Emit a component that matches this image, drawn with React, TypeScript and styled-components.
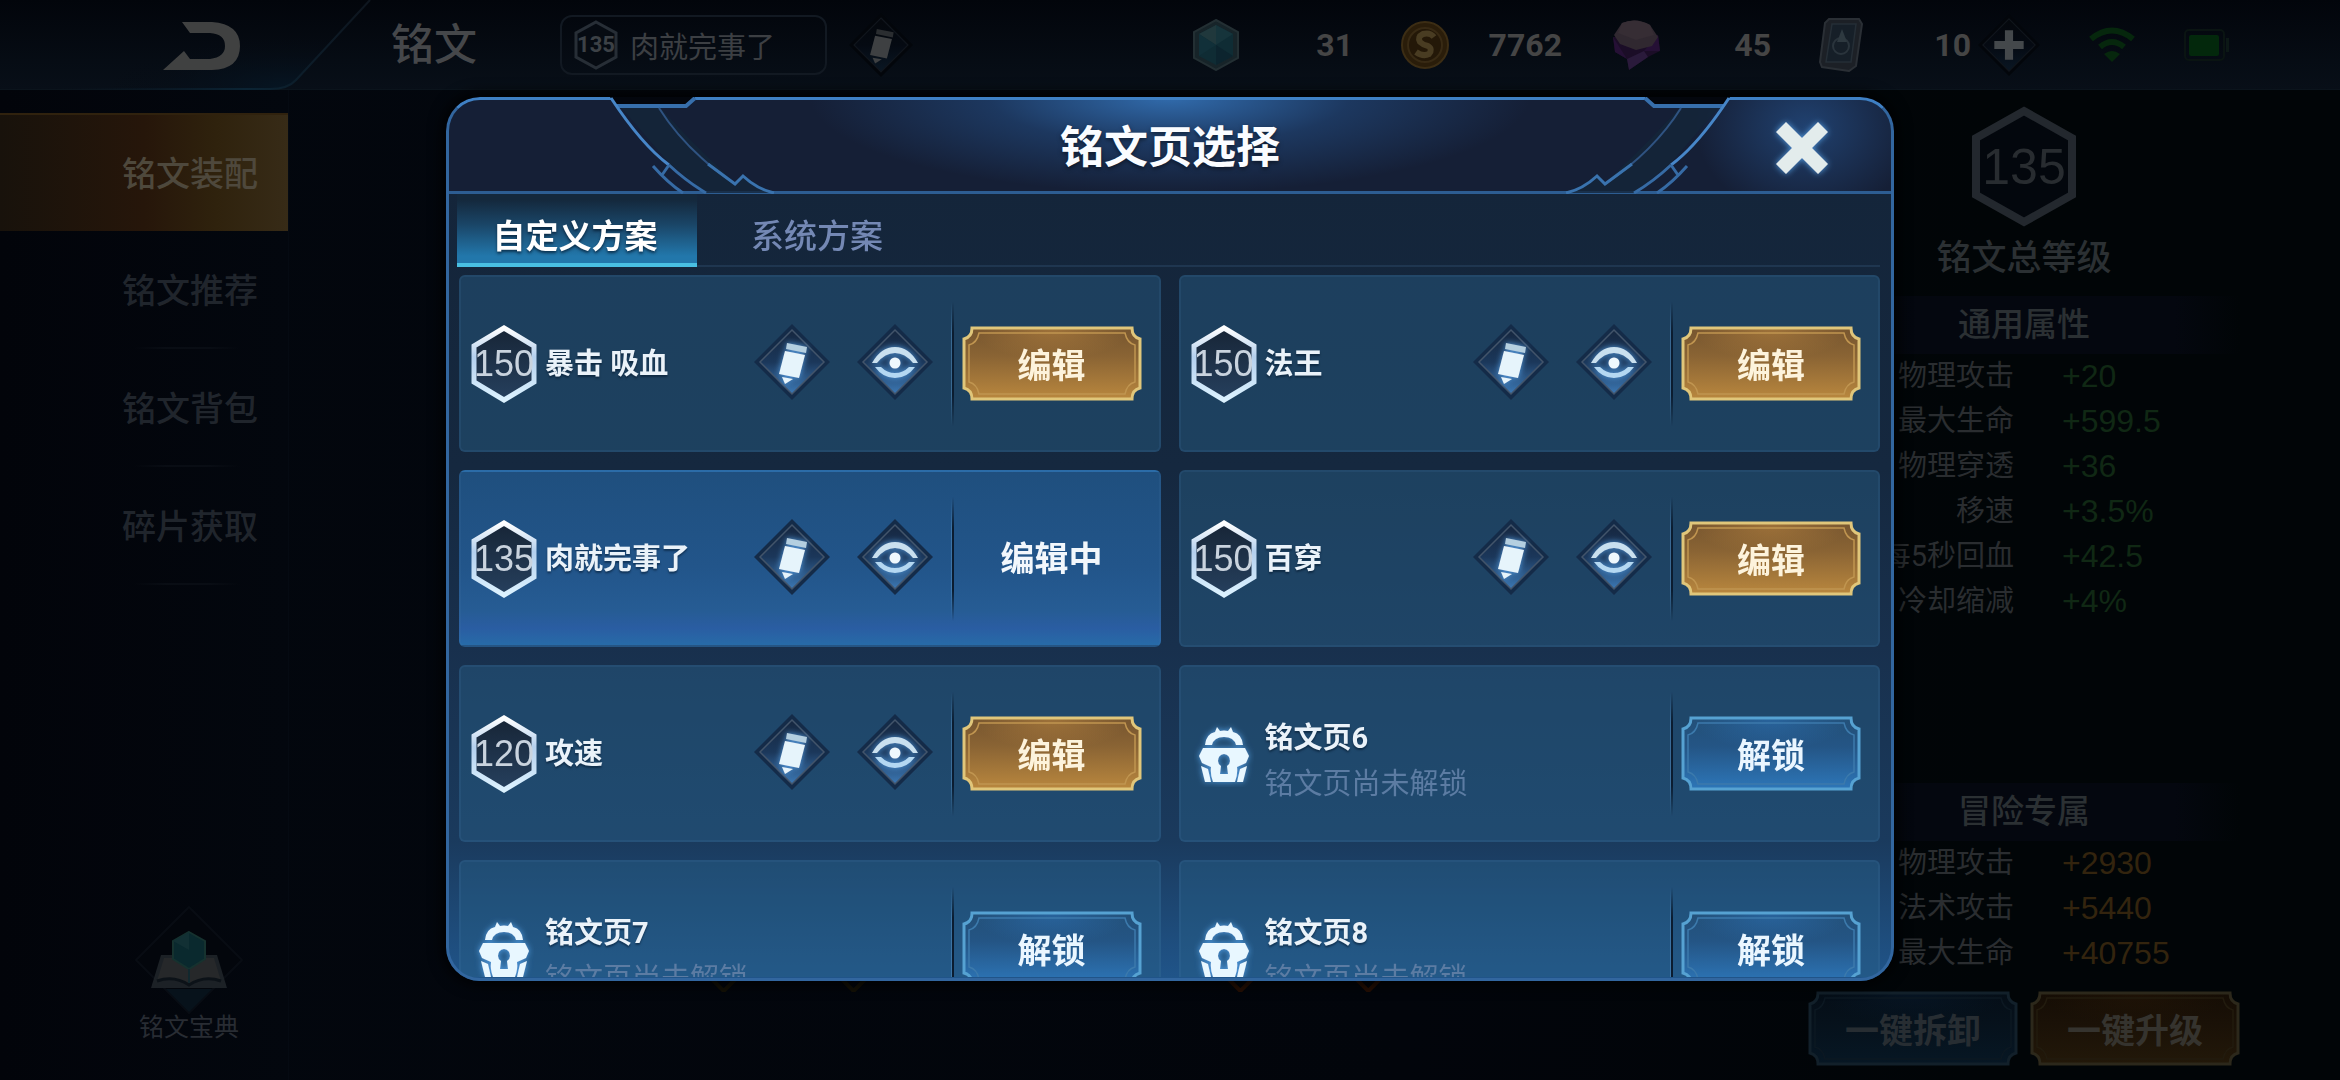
import React from 'react';
import styled, { createGlobalStyle, css } from 'styled-components';

const CJK = '"Noto Sans CJK SC", sans-serif';

const GlobalStyle = createGlobalStyle`
  * { box-sizing: border-box; }
  html, body { margin: 0; background: #02060b; }
  body { font-family: Roboto, ${CJK}; }
  button { font-family: inherit; border: 0; padding: 0; background: none; cursor: pointer; }
  svg { display: block; }
  h1, h2, h3, p, dl, dd, dt, ul { margin: 0; padding: 0; font-weight: 500; }
`;

/* ---------- page behind the dialog ---------- */

const Page = styled.div`
  display: flex;
  flex-direction: column;
  min-height: 100vh;
  background: linear-gradient(90deg, #03070e 0%, #02050b 60%, #010507 85%);
`;

const TopBar = styled.header`
  display: flex;
  align-items: center;
  height: 90px;
  padding-right: 110px;
  background: linear-gradient(#02050b, #080f18);
  border-bottom: 1px solid #0b141c;
`;

const BackButton = styled.button`
  width: 391px;
  height: 90px;
  flex: none;
`;

const PageTitle = styled.h1`
  flex: none;
  width: 169px;
  font-size: 43px;
  line-height: 60px;
  color: #45474a;
`;

const CurrentPage = styled.div`
  display: flex;
  align-items: center;
  gap: 12px;
  width: 267px;
  height: 60px;
  padding-left: 12px;
  border: 2px solid #121922;
  border-radius: 12px;
  font-size: 29px;
  color: #3c3f43;
`;

const RenameButton = styled.button`
  margin-left: 22px;
`;

const Wallet = styled.ul`
  display: flex;
  align-items: center;
  gap: 48px;
  margin-left: auto;
  list-style: none;
`;

const Currency = styled.li<{ $width: number }>`
  display: flex;
  align-items: center;
  justify-content: space-between;
  width: ${(p) => p.$width}px;
  font: 700 32px/40px Roboto, sans-serif;
  color: #454545;
`;

const StatusGroup = styled.div`
  display: flex;
  align-items: center;
  gap: 48px;
  margin-left: 7px;
`;

const Main = styled.main`
  display: flex;
  flex: 1;
`;

const SideNav = styled.nav`
  display: flex;
  flex-direction: column;
  width: 289px;
  padding: 23px 0 39px;
  background: linear-gradient(90deg, #02040a, #03070e);
  border-right: 1px solid #050a12;
`;

const SideItem = styled.button<{ $active?: boolean }>`
  height: 118px;
  padding: 0 30px 4px 0;
  text-align: right;
  font-size: 34px;
  font-weight: 500;
  color: #20252c;
  background: linear-gradient(90deg, transparent, #090d14 30%, #090d14 70%, transparent) right 48px bottom / 106px 2px
    no-repeat;
  ${(p) =>
    p.$active &&
    css`
      color: #4e483c;
      background: linear-gradient(90deg, #18120b 0%, #26160a 50%, #2f220d 75%, #372b17 100%);
      border-top: 2px solid #30220e;
    `}
`;

const Codex = styled.button`
  display: flex;
  flex-direction: column;
  align-items: center;
  width: 110px;
  margin: auto 44px 0 auto;
  font-size: 25px;
  line-height: 26px;
  color: #282c33;
`;

const Board = styled.div`
  display: flex;
  flex: 1;
  align-items: flex-end;
  padding-bottom: 88px;
`;

const StatPanel = styled.aside`
  display: flex;
  flex-direction: column;
  align-items: center;
  width: 432px;
  margin-right: 100px;
  padding: 16px 0 14px;
  color: #2b3033;
`;

const TotalLevel = styled.h2`
  margin-top: 2px;
  font-size: 35px;
  line-height: 60px;
`;

const StatTitle = styled.h3`
  width: 100%;
  margin-top: 7px;
  font-size: 33px;
  line-height: 58px;
  text-align: center;
  background: linear-gradient(90deg, transparent 0%, #04070f 25%, #04070f 85%, transparent 100%);
`;

const StatList = styled.dl`
  display: grid;
  grid-template-columns: 206px 1fr;
  column-gap: 48px;
  width: 100%;
  line-height: 45px;
`;

const StatName = styled.dt`
  font-size: 29px;
  font-weight: 400;
  text-align: right;
  color: #2a2d30;
`;

const StatValue = styled.dd<{ $tone: 'green' | 'gold' }>`
  font: 400 32px/45px "Liberation Sans", sans-serif;
  color: ${(p) => (p.$tone === 'green' ? '#102814' : '#33240e')};
`;

const PanelFoot = styled.div`
  display: flex;
  flex-direction: column;
  width: 100%;
  margin-top: auto;
`;

const PanelButtons = styled.div`
  display: flex;
  gap: 12px;
  margin-top: 15px;
`;

/* ---------- dialog ---------- */

const Overlay = styled.div`
  position: fixed;
  inset: 0;
  display: flex;
  justify-content: center;
  align-items: stretch;
  padding: 97px 0 99px;
`;

const Dialog = styled.section`
  position: relative;
  display: flex;
  flex-direction: column;
  width: 62%;
  max-width: 1448px;
  padding-bottom: 4px;
  border-radius: 34px;
  overflow: hidden;
  background: linear-gradient(#14253a 10%, #15283f 42%, #18304d 62%, #1a3a5d 84%, #20558a 100%);
  box-shadow: 0 0 14px 4px rgba(0, 0, 0, 0.8);

  &::after {
    content: '';
    position: absolute;
    inset: 0;
    border: 3px solid #32669f;
    border-top-color: #3f80c4;
    border-radius: 34px;
    pointer-events: none;
  }
`;

const DialogHead = styled.header`
  display: grid;
  grid-template-columns: 1fr auto 1fr;
  align-items: center;
  flex: none;
  height: 97px;
  padding-top: 8px;
  border-bottom: 3px solid #2d5d92;
  background:
    radial-gradient(ellipse 360px 96px at 50% 0, rgba(52, 116, 186, 0.9), rgba(36, 80, 136, 0.5) 50%, transparent),
    radial-gradient(ellipse 110px 90px at 1360px 30px, rgba(40, 88, 150, 0.6), transparent),
    #151f36;
`;

const Ornament = styled.svg<{ $flip?: boolean }>`
  position: absolute;
  z-index: 1;
  top: 0;
  pointer-events: none;
  ${(p) => (p.$flip ? 'right: 0; transform: scaleX(-1);' : 'left: 0;')}
`;

const DialogTitle = styled.h2`
  grid-column: 2;
  font-size: 44px;
  font-weight: 700;
  line-height: 60px;
  color: #fafcff;
  text-shadow: 0 2px 4px rgba(0, 0, 0, 0.5);
`;

const CloseButton = styled.button`
  justify-self: end;
  margin-right: 60px;
`;

const Tabs = styled.div`
  display: flex;
  flex: none;
  margin: 0 14px 0 11px;
  border-bottom: 2px solid #1f3650;
`;

const Tab = styled.button<{ $active?: boolean }>`
  width: 240px;
  height: 73px;
  margin-bottom: -2px;
  padding: 12px 0 0;
  font-size: 33px;
  line-height: 50px;
  font-weight: 500;
  color: #7488b4;
  ${(p) =>
    p.$active &&
    css`
      color: #fff;
      font-weight: 700;
      text-shadow: 0 2px 3px rgba(0, 20, 40, 0.7);
      background: linear-gradient(#14283c 8%, #1a4668 45%, #2277ab 90%);
      border-bottom: 4px solid #49bfe2;
      padding: 16px 4px 0 0;
    `}
`;

const SchemeGrid = styled.div`
  display: grid;
  grid-template-columns: 1fr 1fr;
  grid-auto-rows: 177px;
  gap: 18px;
  flex: 1 1 0;
  min-height: 0;
  margin-top: 8px;
  padding: 0 14px 0 13px;
  overflow-y: auto;
  scrollbar-width: none;
`;

const Card = styled.article<{ $active?: boolean }>`
  display: flex;
  align-items: center;
  gap: 8px;
  padding: 0 17px 0 10px;
  border-radius: 6px;
  border: 2px solid rgba(70, 120, 165, 0.16);
  background: ${(p) =>
    p.$active
      ? 'linear-gradient(#1f4f7e, #22558a 55%, #265c94 80%, #2a5da2 90%, #276ba8)'
      : 'rgba(40, 95, 135, 0.45)'};
`;

const CardSlot = styled.div`
  display: flex;
  justify-content: center;
  width: 66px;
  flex: none;
`;

const CardName = styled.h3`
  flex: 1;
  font-size: 29px;
  font-weight: 700;
  line-height: 46px;
  color: #eaf2f9;
  text-shadow: 0 2px 2px rgba(0, 20, 40, 0.5);
`;

const LockedText = styled.div`
  flex: 1;
  padding-top: 14px;
`;

const LockedNote = styled.p`
  font-size: 29px;
  line-height: 46px;
  font-weight: 400;
  color: #5c7ca3;
`;

const Actions = styled.div`
  display: flex;
  gap: 27px;
  margin-right: 10px;
  padding-bottom: 4px;
`;

const Divider = styled.span`
  width: 3px;
  height: 124px;
  background: linear-gradient(90deg, rgba(84, 144, 196, 0.5) 33%, #0b1c30 33%);
  mask-image: linear-gradient(transparent, #000 25%, #000 75%, transparent);
`;

const ActionSlot = styled.div`
  width: 180px;
  flex: none;
  font-size: 34px;
  line-height: 50px;
  font-weight: 700;
  text-align: center;
  color: #f2f7fc;
`;

const FrameButton = styled.button<{ $color: string }>`
  position: relative;
  width: 100%;
  height: 75px;
  font-size: 34px;
  font-weight: 700;
  color: ${(p) => p.$color};

  & > svg {
    position: absolute;
    inset: 0;
    width: 100%;
    height: 100%;
  }

  & > span {
    position: relative;
  }
`;

const BadgeBox = styled.div<{ $w: number; $h: number; $font: string; $color: string }>`
  display: grid;
  place-items: center;
  flex: none;
  width: ${(p) => p.$w}px;
  height: ${(p) => p.$h}px;
  font: ${(p) => p.$font};
  color: ${(p) => p.$color};

  & > * {
    grid-area: 1 / 1;
  }
`;

/* ---------- drawings ---------- */

type Tone = 'gold' | 'blue' | 'dimGold' | 'dimBlue';

const TONES: Record<Tone, { text: string; line: string; inner: string; top: string; mid: string; low: string; glow: string }> = {
  gold: { text: '#fdf3dc', line: '#e0c67a', inner: '#c09550', top: '#76552f', mid: '#8a6434', low: '#b9873e', glow: '#b88440' },
  blue: { text: '#eaf6ff', line: '#56a2d2', inner: '#3c7aac', top: '#235078', mid: '#245585', low: '#2d76b8', glow: '#2c70b4' },
  dimGold: { text: '#35332e', line: '#2c281b', inner: '#221b0e', top: '#150d05', mid: '#1a1107', low: '#221809', glow: '#241607' },
  dimBlue: { text: '#272d32', line: '#12202a', inner: '#0c1822', top: '#050e17', mid: '#06111b', low: '#071724', glow: '#07182a' },
};

function NotchedButton({ tone, width = 180, children }: { tone: Tone; width?: number; children: React.ReactNode }) {
  const t = TONES[tone];
  const w = width;
  const outer = `M10 2H${w - 10}Q${w - 10} 11 ${w - 2} 13V62Q${w - 10} 64 ${w - 10} 73H10Q10 64 2 62V13Q10 11 10 2Z`;
  const inner = `M17 7H${w - 17}Q${w - 15} 17 ${w - 7} 19V56Q${w - 15} 58 ${w - 17} 68H17Q15 58 7 56V19Q15 17 17 7Z`;
  return (
    <FrameButton $color={t.text}>
      <svg viewBox={`0 0 ${w} 75`} preserveAspectRatio="none" aria-hidden="true">
        <defs>
          <linearGradient id={`fill-${tone}`} x1="0" y1="0" x2="0" y2="1">
            <stop offset="0" stopColor={t.top} />
            <stop offset="0.4" stopColor={t.mid} />
            <stop offset="1" stopColor={t.low} />
          </linearGradient>
          <radialGradient id={`glow-${tone}`} cx="0.5" cy="0" r="0.45">
            <stop offset="0" stopColor={t.glow} stopOpacity="0.6" />
            <stop offset="1" stopColor={t.glow} stopOpacity="0" />
          </radialGradient>
        </defs>
        <path d={outer} fill={`url(#fill-${tone})`} />
        <path d={outer} fill={`url(#glow-${tone})`} stroke={t.line} strokeWidth="3" />
        <path d={inner} fill="none" stroke={t.inner} strokeWidth="1.5" />
      </svg>
      <span>{children}</span>
    </FrameButton>
  );
}

function HexBadge({ value }: { value: number }) {
  return (
    <BadgeBox $w={66} $h={78} $font='400 36px/40px "Liberation Sans", sans-serif' $color="#c9d3de">
      <svg width="66" height="78" viewBox="0 0 66 78" aria-hidden="true">
        <defs>
          <linearGradient id="hex-line" x1="0" y1="0" x2="0" y2="1">
            <stop offset="0" stopColor="#ffffff" />
            <stop offset="0.4" stopColor="#b4d0ee" />
            <stop offset="1" stopColor="#dcf2ff" />
          </linearGradient>
          <linearGradient id="hex-fill" x1="0" y1="0" x2="0" y2="1">
            <stop offset="0" stopColor="#172536" />
            <stop offset="1" stopColor="#26405e" />
          </linearGradient>
        </defs>
        <path d="M33 3L63 21V57L33 75L3 57V21Z" fill="url(#hex-fill)" stroke="url(#hex-line)" strokeWidth="5" />
      </svg>
      <span>{value}</span>
    </BadgeBox>
  );
}

function Diamond({ size = 76, dim, children }: { size?: number; dim?: boolean; children?: React.ReactNode }) {
  const id = dim ? 'diamond-dim' : 'diamond';
  return (
    <svg width={size} height={size} viewBox="0 0 76 76" aria-hidden="true">
      <defs>
        <linearGradient id={id} x1="0" y1="0" x2="0" y2="1">
          <stop offset="0" stopColor={dim ? '#04070c' : '#162740'} />
          <stop offset="0.5" stopColor={dim ? '#050a12' : '#1b375a'} />
          <stop offset="1" stopColor={dim ? '#0a1724' : '#3c78b4'} />
        </linearGradient>
        <filter id="soft" x="-40%" y="-40%" width="180%" height="180%">
          <feDropShadow dx="0" dy="0" stdDeviation="3" floodColor="#58a8f0" floodOpacity="0.9" />
        </filter>
      </defs>
      <path d="M38 0L76 38L38 76L0 38Z" fill={dim ? '#03060b' : '#142b48'} />
      <path d="M38 6L70 38L38 70L6 38Z" fill={`url(#${id})`} stroke={dim ? '#10151c' : '#42546a'} strokeWidth="1.5" />
      {children}
    </svg>
  );
}

function PencilDiamond({ size, dim }: { size?: number; dim?: boolean }) {
  return (
    <Diamond size={size} dim={dim}>
      <g filter={dim ? undefined : 'url(#soft)'}>
        <path d="M33 19L53 23L52 29L32 25Z" fill={dim ? '#2a2d30' : '#b4cfe0'} />
        <path d="M31 27L51 31L45 54L25 50Z" fill={dim ? '#3e4042' : '#e6f4fb'} />
        <path d="M28 53L39 55L31 60Z" fill={dim ? '#3e4042' : '#e6f4fb'} />
      </g>
    </Diamond>
  );
}

function EyeDiamond() {
  return (
    <Diamond>
      <g filter="url(#soft)">
        <path d="M15 39Q24 23 38 23Q52 23 61 39H56Q48 29 38 29Q28 29 20 39Z" fill="#c9e0ef" />
        <path d="M18 43H24Q30 49 38 49Q46 49 52 43H58Q50 54 38 54Q26 54 18 43Z" fill="#b4d8f2" />
        <circle cx="38" cy="39" r="5.5" fill="#eef8fd" />
      </g>
    </Diamond>
  );
}

function LockIcon() {
  return (
    <svg width="60" height="66" viewBox="0 0 60 66" aria-hidden="true">
      <g fill="#e8f7ff" filter="url(#soft)">
        <path d="M11 24Q12 13 21 11L23 6L26 10Q30 9 34 10L37 6L39 11Q48 13 49 24H42Q40 16 30 16Q20 16 18 24Z" />
        <path
          fillRule="evenodd"
          d="M9 27H51L55 35L52 42L43 46Q44 53 41 61H19Q16 53 17 46L8 42L5 35ZM30 33Q24 34 24 40Q24 43 27 45L26 53H34L33 45Q36 43 36 40Q36 34 30 33Z"
        />
        <path d="M7 45L14 48L17 61H11ZM53 45L46 48L43 61H49Z" />
      </g>
    </svg>
  );
}

function HeaderOrnament({ flip }: { flip?: boolean }) {
  return (
    <Ornament $flip={flip} width="340" height="97" viewBox="0 0 340 97" fill="none" aria-hidden="true">
      <path d="M166 0L224 67L260 96H327L297 79L289 86Q240 40 213 9Z" fill="#14263a" opacity="0.8" />
      <path d="M164 0H249L241 9H170Z" fill="#03060d" />
      <path d="M170 9H240L249 1" stroke="#376fac" strokeWidth="4" />
      <path d="M165 1Q196 48 223 68" stroke="#4786c8" strokeWidth="3" />
      <path d="M223 68Q240 84 260 96M223 68L216 78M207 69Q222 86 237 96" stroke="#366ba5" strokeWidth="3" />
      <path d="M213 11Q240 54 289 87" stroke="#2f5381" strokeWidth="2" />
      <path d="M262 67L289 87L297 79Q311 92 328 96" stroke="#3a73ae" strokeWidth="3" />
    </Ornament>
  );
}

function BackDrawing() {
  return (
    <svg width="391" height="90" viewBox="0 0 391 90" aria-hidden="true">
      <defs>
        <radialGradient id="back-bg" cx="0.75" cy="1" r="0.6">
          <stop offset="0" stopColor="#061624" />
          <stop offset="1" stopColor="#050a12" stopOpacity="0" />
        </radialGradient>
        <linearGradient id="back-line" x1="0" y1="0" x2="1" y2="0">
          <stop offset="0" stopColor="#0a1520" stopOpacity="0" />
          <stop offset="0.6" stopColor="#0b2434" />
          <stop offset="1" stopColor="#0e151e" />
        </linearGradient>
      </defs>
      <path d="M100 0H370L296 80Q288 89 270 89H60Z" fill="url(#back-bg)" />
      <path d="M370 0L296 80Q288 89 270 89H60" fill="none" stroke="url(#back-line)" strokeWidth="2" />
      <path d="M182 22H212Q240 24 240 46Q240 69 212 70H163L184 51L190 59H210Q225 57 225 46Q225 34 210 33H190Z" fill="#404141" />
    </svg>
  );
}

const GemIcon = () => (
  <svg width="48" height="52" viewBox="0 0 48 52" aria-hidden="true">
    <path d="M24 1L46 13V39L24 51L2 39V13Z" fill="#172429" stroke="#232f33" strokeWidth="2" />
    <path d="M24 6L41 15V37L24 46L7 37V15Z" fill="#0f2c34" />
    <path d="M24 6L7 15L24 26Z" fill="#20383c" />
    <path d="M24 6L41 15L24 26Z" fill="#16343b" />
    <path d="M24 26L41 37L24 46Z" fill="#0c242e" />
    <path d="M24 26L7 37V15Z" fill="#113039" />
  </svg>
);

const CoinIcon = () => (
  <svg width="48" height="52" viewBox="0 0 48 52" aria-hidden="true">
    <circle cx="24" cy="26" r="23" fill="#2a1d0a" stroke="#3c2d14" strokeWidth="2" />
    <circle cx="24" cy="26" r="17" fill="#241808" stroke="#382a14" strokeWidth="2" />
    <path d="M33 18Q29 13 22 15Q16 18 19 23Q22 26 27 27Q32 30 28 35Q22 38 15 33" fill="none" stroke="#493c22" strokeWidth="6" />
  </svg>
);

const CrystalIcon = () => (
  <svg width="52" height="52" viewBox="0 0 52 52" aria-hidden="true">
    <path d="M3 18L48 16L50 32L38 38L19 51L17 40L5 33Z" fill="#1b0d27" />
    <path d="M3 18L17 40L5 33ZM48 16L34 32L50 32Z" fill="#251035" />
    <path d="M17 40L34 32L38 38L19 51Z" fill="#2a1a3b" />
    <path d="M12 4Q26 -2 40 6L48 18L42 27L26 31L10 25L4 16Z" fill="#302830" />
    <path d="M12 4Q26 -2 40 6L44 16L26 21L8 14Z" fill="#362d34" />
  </svg>
);

const TicketIcon = () => (
  <svg width="44" height="54" viewBox="0 0 44 54" aria-hidden="true">
    <path d="M10 1H40L43 6L37 48L30 53L3 49L1 44L6 5Z" fill="#1c2026" stroke="#2a2f35" strokeWidth="2" />
    <path d="M13 6H37L32 44H7Z" fill="#161f28" stroke="#252e36" strokeWidth="1.5" />
    <circle cx="22" cy="28" r="8" fill="none" stroke="#2a343c" strokeWidth="2" />
    <path d="M23 11L28 24H18Z" fill="#2e3940" />
  </svg>
);

const WifiIcon = () => (
  <svg width="48" height="36" viewBox="0 0 48 36" fill="none" stroke="#06270d" strokeWidth="6" aria-hidden="true">
    <path d="M3 12Q24 -5 45 12" />
    <path d="M12 20Q24 10 36 20" />
    <path d="M24 35L16 27Q24 21 32 27Z" fill="#06270d" stroke="none" />
  </svg>
);

const BatteryIcon = () => (
  <svg width="46" height="32" viewBox="0 0 46 32" aria-hidden="true">
    <rect x="1" y="1" width="39" height="30" rx="4" fill="none" stroke="#0a1412" strokeWidth="2" />
    <rect x="5" y="6" width="30" height="21" rx="2" fill="#03280c" />
    <rect x="42" y="9" width="3" height="14" fill="#0c1816" />
  </svg>
);

const CodexIcon = () => (
  <svg width="110" height="110" viewBox="0 0 110 110" aria-hidden="true">
    <path d="M55 2L108 55L55 108L2 55Z" fill="#03060c" stroke="#080c13" strokeWidth="2" />
    <path d="M32 84H78L55 107Z" fill="#07121b" />
    <path d="M27 50H83L93 83H17Z" fill="#1c2126" />
    <path d="M30 53H80L87 76Q70 70 55 80Q40 70 23 76Z" fill="#26282a" />
    <path d="M23 76Q40 70 55 80Q70 70 87 76" fill="none" stroke="#0c1218" strokeWidth="3" />
    <path d="M55 27L71 36V54L55 64L39 54V36Z" fill="#0a292e" stroke="#16322f" strokeWidth="2" />
    <path d="M55 27L39 36L55 45Z" fill="#123034" />
    <path d="M55 64V78" stroke="#12282e" strokeWidth="2" />
  </svg>
);

const CloseIcon = () => (
  <svg width="64" height="64" viewBox="0 0 64 64" aria-hidden="true">
    <path
      d="M16 6L32 22L48 6L58 16L42 32L58 48L48 58L32 42L16 58L6 48L22 32L6 16Z"
      fill="#e3ecec"
      filter="url(#soft)"
    />
  </svg>
);

/* ---------- data ---------- */

type Scheme = { name: string; level?: number; state: 'ready' | 'editing' | 'locked' };

const SCHEMES: Scheme[] = [
  { name: '暴击 吸血', level: 150, state: 'ready' },
  { name: '法王', level: 150, state: 'ready' },
  { name: '肉就完事了', level: 135, state: 'editing' },
  { name: '百穿', level: 150, state: 'ready' },
  { name: '攻速', level: 120, state: 'ready' },
  { name: '铭文页6', state: 'locked' },
  { name: '铭文页7', state: 'locked' },
  { name: '铭文页8', state: 'locked' },
];

const COMMON_STATS = [
  ['物理攻击', '+20'],
  ['最大生命', '+599.5'],
  ['物理穿透', '+36'],
  ['移速', '+3.5%'],
  ['每5秒回血', '+42.5'],
  ['冷却缩减', '+4%'],
];

const ADVENTURE_STATS = [
  ['物理攻击', '+2930'],
  ['法术攻击', '+5440'],
  ['最大生命', '+40755'],
];

const NAV = ['铭文装配', '铭文推荐', '铭文背包', '碎片获取'];

const Stats = ({ rows, tone }: { rows: string[][]; tone: 'green' | 'gold' }) => (
  <StatList>
    {rows.map(([name, value]) => (
      <React.Fragment key={name}>
        <StatName>{name}</StatName>
        <StatValue $tone={tone}>{value}</StatValue>
      </React.Fragment>
    ))}
  </StatList>
);

function SchemeCard({ scheme }: { scheme: Scheme }) {
  if (scheme.state === 'locked') {
    return (
      <Card>
        <CardSlot>
          <LockIcon />
        </CardSlot>
        <LockedText>
          <CardName>{scheme.name}</CardName>
          <LockedNote>铭文页尚未解锁</LockedNote>
        </LockedText>
        <Divider />
        <ActionSlot>
          <NotchedButton tone="blue">解锁</NotchedButton>
        </ActionSlot>
      </Card>
    );
  }
  return (
    <Card $active={scheme.state === 'editing'}>
      <HexBadge value={scheme.level ?? 0} />
      <CardName>{scheme.name}</CardName>
      <Actions>
        <button aria-label={`重命名 ${scheme.name}`}>
          <PencilDiamond />
        </button>
        <button aria-label={`查看 ${scheme.name}`}>
          <EyeDiamond />
        </button>
      </Actions>
      <Divider />
      <ActionSlot>
        {scheme.state === 'editing' ? '编辑中' : <NotchedButton tone="gold">编辑</NotchedButton>}
      </ActionSlot>
    </Card>
  );
}

export default function App() {
  return (
    <>
      <GlobalStyle />
      <Page>
        <TopBar>
          <BackButton aria-label="返回">
            <BackDrawing />
          </BackButton>
          <PageTitle>铭文</PageTitle>
          <CurrentPage>
            <BadgeBox $w={44} $h={50} $font="700 22px/30px Roboto, sans-serif" $color="#3c4146">
              <svg width="44" height="50" viewBox="0 0 44 50" aria-hidden="true">
                <path d="M22 2L42 13V37L22 48L2 37V13Z" fill="#060b12" stroke="#272e36" strokeWidth="3" />
              </svg>
              <span>135</span>
            </BadgeBox>
            肉就完事了
          </CurrentPage>
          <RenameButton aria-label="重命名">
            <PencilDiamond size={64} dim />
          </RenameButton>
          <Wallet>
            <Currency $width={161}><GemIcon />31</Currency>
            <Currency $width={161}><CoinIcon />7762</Currency>
            <Currency $width={161}><CrystalIcon />45</Currency>
            <Currency $width={152}><TicketIcon />10</Currency>
          </Wallet>
          <StatusGroup>
            <button aria-label="增加">
              <Diamond size={62} dim>
                <path d="M33 20H43V33H56V43H43V56H33V43H20V33H33Z" fill="#44484b" />
              </Diamond>
            </button>
            <WifiIcon />
            <BatteryIcon />
          </StatusGroup>
        </TopBar>

        <Main>
          <SideNav>
            {NAV.map((label, i) => (
              <SideItem key={label} $active={i === 0}>
                {label}
              </SideItem>
            ))}
            <Codex>
              <CodexIcon />
              铭文宝典
            </Codex>
          </SideNav>
          <Board>
            <svg width="100%" height="60" viewBox="0 0 1520 60" aria-hidden="true">
              <path d="M408 32L435 59L462 32M538 32L565 59L592 32" fill="none" stroke="#141106" strokeWidth="4" />
              <path d="M925 32L952 59L979 32M1053 32L1080 59L1107 32" fill="none" stroke="#260f04" strokeWidth="4" />
            </svg>
          </Board>
          <StatPanel>
            <BadgeBox $w={106} $h={121} $font='400 50px/60px "Liberation Sans", sans-serif' $color="#282c30">
              <svg width="106" height="121" viewBox="0 0 106 121" aria-hidden="true">
                <path d="M53 5L101 32V89L53 116L5 89V32Z" fill="#03070d" stroke="#23282e" strokeWidth="8" />
              </svg>
              <span>135</span>
            </BadgeBox>
            <TotalLevel>铭文总等级</TotalLevel>
            <StatTitle>通用属性</StatTitle>
            <Stats rows={COMMON_STATS} tone="green" />
            <PanelFoot>
              <StatTitle>冒险专属</StatTitle>
              <Stats rows={ADVENTURE_STATS} tone="gold" />
              <PanelButtons>
                <NotchedButton tone="dimBlue" width={210}>一键拆卸</NotchedButton>
                <NotchedButton tone="dimGold" width={210}>一键升级</NotchedButton>
              </PanelButtons>
            </PanelFoot>
          </StatPanel>
        </Main>
      </Page>

      <Overlay>
        <Dialog role="dialog" aria-modal="true" aria-labelledby="dialog-title">
          <DialogHead>
            <HeaderOrnament />
            <DialogTitle id="dialog-title">铭文页选择</DialogTitle>
            <CloseButton aria-label="关闭">
              <CloseIcon />
            </CloseButton>
            <HeaderOrnament flip />
          </DialogHead>
          <Tabs role="tablist">
            <Tab role="tab" aria-selected="true" $active>
              自定义方案
            </Tab>
            <Tab role="tab" aria-selected="false">
              系统方案
            </Tab>
          </Tabs>
          <SchemeGrid role="tabpanel">
            {SCHEMES.map((s) => (
              <SchemeCard key={s.name} scheme={s} />
            ))}
          </SchemeGrid>
        </Dialog>
      </Overlay>
    </>
  );
}
